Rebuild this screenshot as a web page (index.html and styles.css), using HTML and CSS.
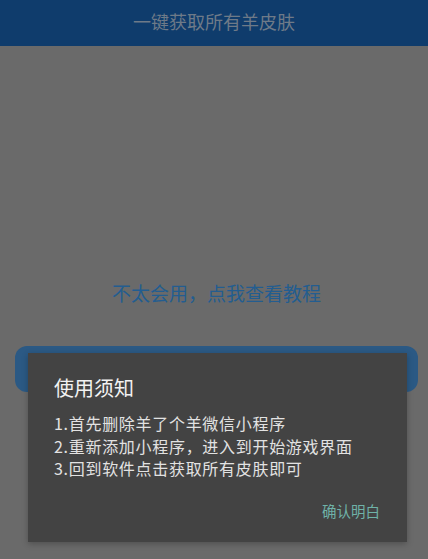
FILE: index.html
```html
<!DOCTYPE html>
<html lang="zh-CN">
<head>
	<meta charset="UTF-8">
	<meta name="viewport" content="width=device-width, initial-scale=1.0">
	<title>一键获取所有羊皮肤</title>
	<link rel="stylesheet" href="styles.css">
</head>
<body>
	<div class="header">一键获取所有羊皮肤</div>
	<div class="main">
		<a class="help" href="javascript:;">不太会用，点我查看教程</a>
		<a class="get-btn" href="javascript:;">一键获取</a>
	</div>

	<!-- notice dialog -->
	<div class="dialog">
		<h2>使用须知</h2>
		<ol>
			<li>1.首先删除羊了个羊微信小程序</li>
			<li>2.重新添加小程序，进入到开始游戏界面</li>
			<li>3.回到软件点击获取所有皮肤即可</li>
		</ol>
		<div class="actions">
			<a href="javascript:;">确认明白</a>
		</div>
	</div>
</body>
</html>
```

FILE: styles.css
```css
* {
	margin: 0;
	padding: 0;
}

body {
	height: 559px;
	overflow: hidden;
	background-color: #6a6a6a;
	font-family: "Noto Sans CJK SC", "Noto Sans", sans-serif;
}

a {
	text-decoration: none;
}

.header {
	height: 46px;
	line-height: 42px;
	text-align: center;
	font-size: 18px;
	color: #6e7a88;
	background-color: #0f3c6c;
}

.main {
	display: flex;
	flex-direction: column;
	align-items: center;
	padding: 0 10px 0 15px;
}

.help {
	margin-top: 232px;
	font-size: 19px;
	line-height: 30px;
	color: #235d90;
}

.get-btn {
	align-self: stretch;
	margin-top: 38px;
	height: 46px;
	border-radius: 12px;
	background-color: #2b5984;
	color: #6a6a6a;
	text-align: center;
	line-height: 46px;
}

/* dialog */
.dialog {
	position: absolute;
	left: 28px;
	top: 353px;
	width: 379px;
	height: 189px;
	box-sizing: border-box;
	padding: 21px 26px 0;
	background-color: #434343;
	box-shadow: 0 2px 6px rgba(0, 0, 0, .25);
}

.dialog h2 {
	font-size: 20px;
	font-weight: normal;
	line-height: 28px;
	color: #f2f2f2;
}

.dialog ol {
	margin-top: 10px;
	list-style: none;
	font-size: 16px;
	letter-spacing: .7px;
	line-height: 22.5px;
	color: #e2e2e2;
}

.actions {
	display: flex;
	justify-content: flex-end;
	margin-top: 19px;
	padding-right: 1px;
}

.actions a {
	font-size: 14.5px;
	line-height: 24px;
	color: #6fb2a8;
}
```
